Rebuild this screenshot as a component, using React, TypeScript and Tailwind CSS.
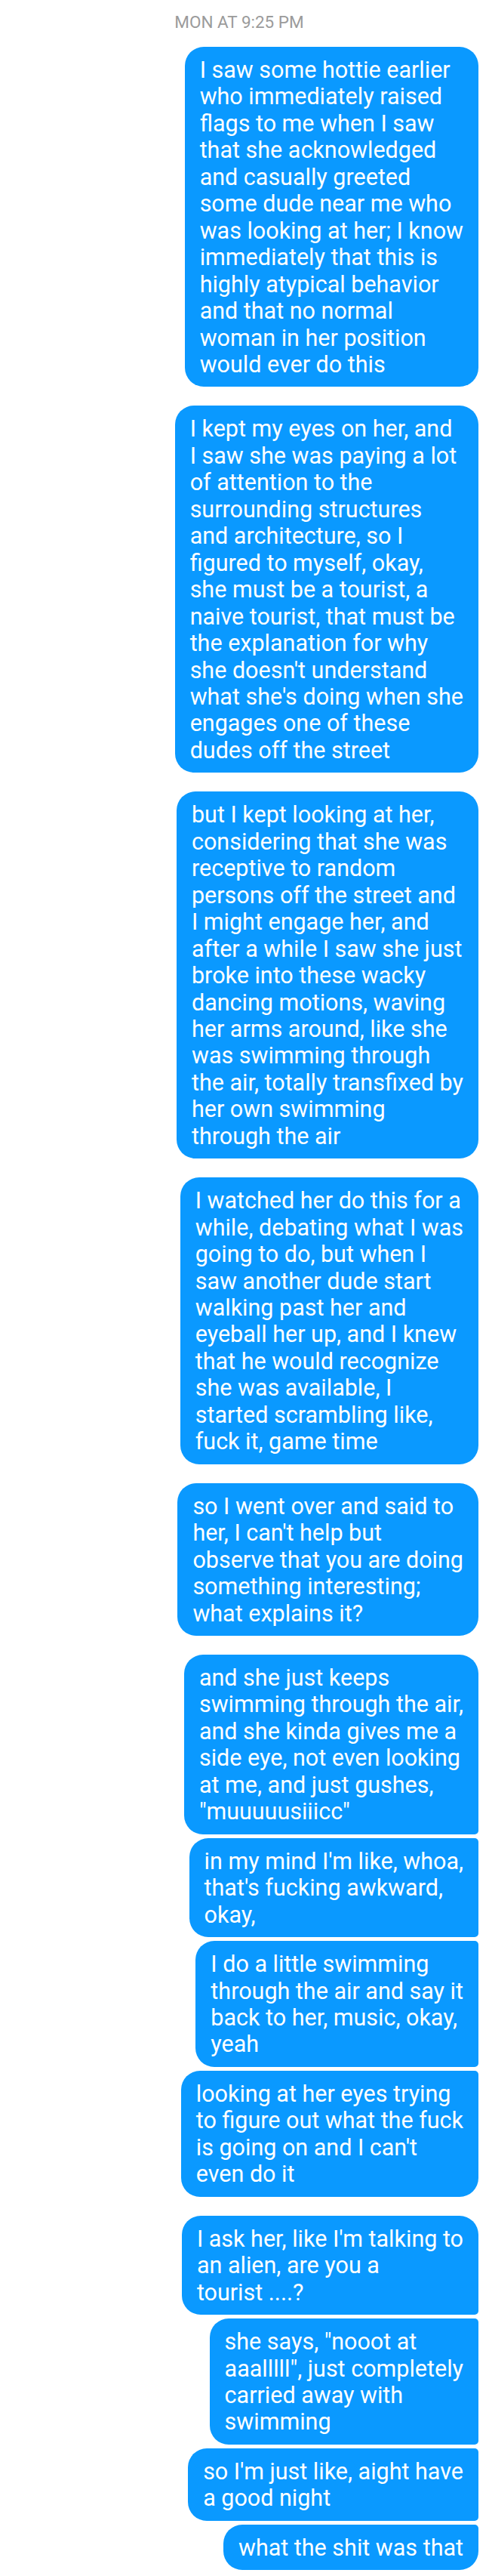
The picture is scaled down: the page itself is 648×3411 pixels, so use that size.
import React from "react";

type Bubble = {
  lines: string[];
};

// each inner array is one run of consecutive messages
const groups: Bubble[][] = [
  [
    {
      lines: [
        "I saw some hottie earlier",
        "who immediately raised",
        "flags to me when I saw",
        "that she acknowledged",
        "and casually greeted",
        "some dude near me who",
        "was looking at her; I know",
        "immediately that this is",
        "highly atypical behavior",
        "and that no normal",
        "woman in her position",
        "would ever do this",
      ],
    },
  ],
  [
    {
      lines: [
        "I kept my eyes on her, and",
        "I saw she was paying a lot",
        "of attention to the",
        "surrounding structures",
        "and architecture, so I",
        "figured to myself, okay,",
        "she must be a tourist, a",
        "naive tourist, that must be",
        "the explanation for why",
        "she doesn't understand",
        "what she's doing when she",
        "engages one of these",
        "dudes off the street",
      ],
    },
  ],
  [
    {
      lines: [
        "but I kept looking at her,",
        "considering that she was",
        "receptive to random",
        "persons off the street and",
        "I might engage her, and",
        "after a while I saw she just",
        "broke into these wacky",
        "dancing motions, waving",
        "her arms around, like she",
        "was swimming through",
        "the air, totally transfixed by",
        "her own swimming",
        "through the air",
      ],
    },
  ],
  [
    {
      lines: [
        "I watched her do this for a",
        "while, debating what I was",
        "going to do, but when I",
        "saw another dude start",
        "walking past her and",
        "eyeball her up, and I knew",
        "that he would recognize",
        "she was available, I",
        "started scrambling like,",
        "fuck it, game time",
      ],
    },
  ],
  [
    {
      lines: [
        "so I went over and said to",
        "her, I can't help but",
        "observe that you are doing",
        "something interesting;",
        "what explains it?",
      ],
    },
  ],
  [
    {
      lines: [
        "and she just keeps",
        "swimming through the air,",
        "and she kinda gives me a",
        "side eye, not even looking",
        "at me, and just gushes,",
        "\"muuuuusiiicc\"",
      ],
    },
    {
      lines: ["in my mind I'm like, whoa,", "that's fucking awkward,", "okay,"],
    },
    {
      lines: [
        "I do a little swimming",
        "through the air and say it",
        "back to her, music, okay,",
        "yeah",
      ],
    },
    {
      lines: [
        "looking at her eyes trying",
        "to figure out what the fuck",
        "is going on and I can't",
        "even do it",
      ],
    },
  ],
  [
    {
      lines: ["I ask her, like I'm talking to", "an alien, are you a", "tourist ....?"],
    },
    {
      lines: [
        "she says, \"nooot at",
        "aaalllll\", just completely",
        "carried away with",
        "swimming",
      ],
    },
    {
      lines: ["so I'm just like, aight have", "a good night"],
    },
    {
      lines: ["what the shit was that"],
    },
  ],
];

// corner shape depends on where the bubble sits in its run
const cornerFor = (index: number, count: number) => {
  if (count === 1) return "rounded-[25px]";
  if (index === 0) return "rounded-[25px] rounded-br-[5px]";
  if (index === count - 1) return "rounded-[25px] rounded-tr-[5px]";
  return "rounded-[25px] rounded-r-[5px]";
};

function MessageBubble({
  bubble,
  corner,
  spacing,
}: {
  bubble: Bubble;
  corner: string;
  spacing: string;
}) {
  return (
    <div
      className={`${spacing} ${corner} bg-[#0a99ff] px-[20px] pt-[13px] pb-[12px] text-[30.5px] leading-[35.45px] text-white`}
    >
      {bubble.lines.map((line, i) => (
        <span key={i} className="block whitespace-nowrap">
          {line}
        </span>
      ))}
    </div>
  );
}

export default function App() {
  return (
    <div className="min-h-screen w-full bg-white font-[Roboto,sans-serif] pt-[16px] pb-[14px] pr-[14px]">
      <div className="text-center text-[22.5px] leading-[27px] text-[#9b9b9b]">
        MON AT 9:25 PM
      </div>
      <div className="mt-[19px] flex flex-col items-end">
        {groups.map((group, g) =>
          group.map((bubble, i) => (
            <MessageBubble
              key={`${g}-${i}`}
              bubble={bubble}
              corner={cornerFor(i, group.length)}
              spacing={g === 0 && i === 0 ? "" : i === 0 ? "mt-[25px]" : "mt-[5px]"}
            />
          ))
        )}
      </div>
    </div>
  );
}
